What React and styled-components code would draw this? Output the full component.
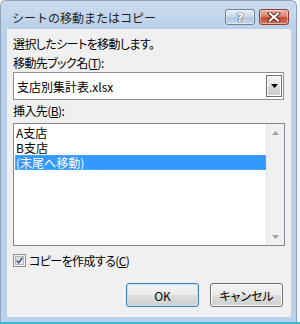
import React from 'react'
import styled, { createGlobalStyle } from 'styled-components'

const GlobalStyle = createGlobalStyle`
  body {
    margin: 0;
    background: #f2f2f2;
    font-family: "Noto Sans CJK JP", "Noto Sans", sans-serif;
    color: #000;
  }
`

const Page = styled.div`
  width: 300px;
  height: 324px;
  display: flex;
  flex-direction: column;
  background: #f4f4f4;
`

const Window = styled.div`
  width: 297px;
  height: 322px;
  box-sizing: border-box;
  display: flex;
  flex-direction: column;
  padding: 0 5px 5px 6px;
  border: 1px solid #8fa3ba;
  border-bottom: none;
  border-radius: 6px 6px 0 0;
  background: linear-gradient(#cddcee, #bad1ea 28px, #b9d1ea);
`

const Taskbar = styled.div`
  height: 2px;
  background: #41b8d8;
`

const TitleBar = styled.div`
  height: 28px;
  display: flex;
  align-items: flex-start;
  margin: 0 2px 0 5px;
`

const Title = styled.div`
  flex: 1;
  margin-top: 9px;
  font-size: 12px;
  line-height: 16px;
  color: #1e1e1e;
`

const CaptionButtons = styled.div`
  display: flex;
  gap: 4px;
  margin-top: 8px;
`

const CaptionButton = styled.div`
  width: 30px;
  height: 16px;
  box-sizing: border-box;
  border-radius: 3px;
  display: flex;
  align-items: center;
  justify-content: center;
  border: 1px solid ${p => (p.$close ? '#8a3f32' : '#6c809a')};
  background: ${p =>
    p.$close
      ? 'linear-gradient(#eab3a6, #d98572 45%, #c54a33 55%, #d4735c)'
      : 'linear-gradient(#e6eef7, #cbdaeb 45%, #b4c8df 55%, #c6d7ea)'};
  box-shadow: inset 0 0 0 1px rgba(255, 255, 255, 0.45);
  font-family: "DejaVu Sans", sans-serif;
  font-weight: bold;
  font-size: 13px;
  line-height: 1;
  color: #fff;
  text-shadow: 0 0 1px #3c4d66, 0 0 1px #3c4d66, 0 0 1px #3c4d66;
`

const Client = styled.div`
  flex: 1;
  background: #f0f0f0;
  display: flex;
  flex-direction: column;
  padding: 7px 6px 0 6px;
  font-size: 12px;
  line-height: 15px;
  font-feature-settings: "palt";
`

const Label = styled.div`
  margin-top: ${p => p.$gap || 0}px;
  letter-spacing: -0.6px;
`

const Key = styled.span`
  text-decoration: underline;
`

const Combo = styled.div`
  margin-top: 2px;
  height: 28px;
  box-sizing: border-box;
  border: 1px solid #8e8f8f;
  background: #fff;
  display: flex;
  padding: 2px 1px 2px 3px;
  margin-right: 1px;
`

const ComboText = styled.div`
  flex: 1;
  display: flex;
  align-items: center;
  font-size: 12px;
`

const DropButton = styled.div`
  width: 16px;
  box-sizing: border-box;
  border: 1px solid #707070;
  background: linear-gradient(#f4f4f4, #e6e6e6 50%, #d8d8d8 50%, #cdcdcd);
  box-shadow: inset 0 0 0 1px #fbfbfb;
  display: flex;
  align-items: center;
  justify-content: center;
`

const ListBox = styled.div`
  margin-top: 5px;
  height: 123px;
  box-sizing: border-box;
  border: 1px solid #828790;
  background: #fff;
  display: flex;
`

const Items = styled.div`
  flex: 1;
  padding: 1px 0 0 1px;
`

const Item = styled.div`
  height: 15px;
  padding-left: 1px;
  line-height: 15px;
  color: ${p => (p.$selected ? '#fff' : '#000')};
  background: ${p => (p.$selected ? '#3399ff' : 'transparent')};
  outline: ${p => (p.$selected ? '1px dotted #e8954e' : 'none')};
  outline-offset: -1px;
`

const ScrollBar = styled.div`
  width: 17px;
  background: #f0f0f0;
  border-left: 1px solid #e6e6e6;
  display: flex;
  flex-direction: column;
  justify-content: space-between;
`

const Arrow = styled.div`
  height: 17px;
  display: flex;
  align-items: center;
  justify-content: center;
`

const CheckRow = styled.label`
  margin-top: 6px;
  height: 16px;
  display: flex;
  align-items: center;
  gap: 3px;
  letter-spacing: -0.6px;
`

const CheckBox = styled.div`
  width: 13px;
  height: 13px;
  box-sizing: border-box;
  border: 1px solid #8e8f8f;
  background: #f4f4f4;
  padding: 1px;
  display: flex;
`

const CheckInner = styled.div`
  flex: 1;
  border: 1px solid #b4b4b4;
  background: linear-gradient(135deg, #d5d5d5, #f7f7f7);
  display: flex;
  align-items: center;
  justify-content: center;
`

const ButtonRow = styled.div`
  margin-top: 15px;
  margin-right: 2px;
  display: flex;
  justify-content: flex-end;
  gap: 11px;
`

const Button = styled.div`
  width: 73px;
  height: 24px;
  box-sizing: border-box;
  border-radius: 3px;
  border: 1px solid ${p => (p.$default ? '#3c7fb1' : '#707070')};
  background: linear-gradient(#f2f2f2, #ebebeb 50%, #dddddd 50%, #cfcfcf);
  box-shadow: inset 0 0 0 1px ${p => (p.$default ? '#c4e5f6' : '#fcfcfc')};
  display: flex;
  align-items: center;
  justify-content: center;
  font-size: 12px;
`

const CloseGlyph = () => (
  <svg width="14" height="10" viewBox="0 0 14 10">
    <path d="M3 1.5 L11 8.5 M11 1.5 L3 8.5" stroke="#5a2219" strokeWidth="4" strokeLinecap="square" />
    <path d="M3 1.5 L11 8.5 M11 1.5 L3 8.5" stroke="#fff" strokeWidth="2.2" strokeLinecap="square" />
  </svg>
)

const Triangle = ({ up, color = '#000' }) => (
  <svg width="7" height="4" viewBox="0 0 7 4">
    <path d={up ? 'M0 4 L3.5 0 L7 4 Z' : 'M0 0 L7 0 L3.5 4 Z'} fill={color} />
  </svg>
)

export default function App() {
  return (
    <Page>
      <GlobalStyle />
      <Window>
        <TitleBar>
          <Title>シートの移動またはコピー</Title>
          <CaptionButtons>
            <CaptionButton>?</CaptionButton>
            <CaptionButton $close>
              <CloseGlyph />
            </CaptionButton>
          </CaptionButtons>
        </TitleBar>
        <Client>
          <Label>選択したシートを移動します。</Label>
          <Label $gap={4}>
            移動先ブック名(<Key>T</Key>):
          </Label>
          <Combo>
            <ComboText>支店別集計表.xlsx</ComboText>
            <DropButton>
              <Triangle />
            </DropButton>
          </Combo>
          <Label $gap={3}>
            挿入先(<Key>B</Key>):
          </Label>
          <ListBox>
            <Items>
              <Item>A支店</Item>
              <Item>B支店</Item>
              <Item $selected>(末尾へ移動)</Item>
            </Items>
            <ScrollBar>
              <Arrow>
                <Triangle up color="#a3a3a3" />
              </Arrow>
              <Arrow>
                <Triangle color="#a3a3a3" />
              </Arrow>
            </ScrollBar>
          </ListBox>
          <CheckRow>
            <CheckBox>
              <CheckInner>
                <svg width="7" height="7" viewBox="0 0 7 7">
                  <path d="M0.8 3.6 L2.8 5.8 L6.3 0.8" stroke="#4a5d8e" strokeWidth="1.6" fill="none" />
                </svg>
              </CheckInner>
            </CheckBox>
            <span>
              コピーを作成する(<Key>C</Key>)
            </span>
          </CheckRow>
          <ButtonRow>
            <Button $default>OK</Button>
            <Button>キャンセル</Button>
          </ButtonRow>
        </Client>
      </Window>
      <Taskbar />
    </Page>
  )
}
